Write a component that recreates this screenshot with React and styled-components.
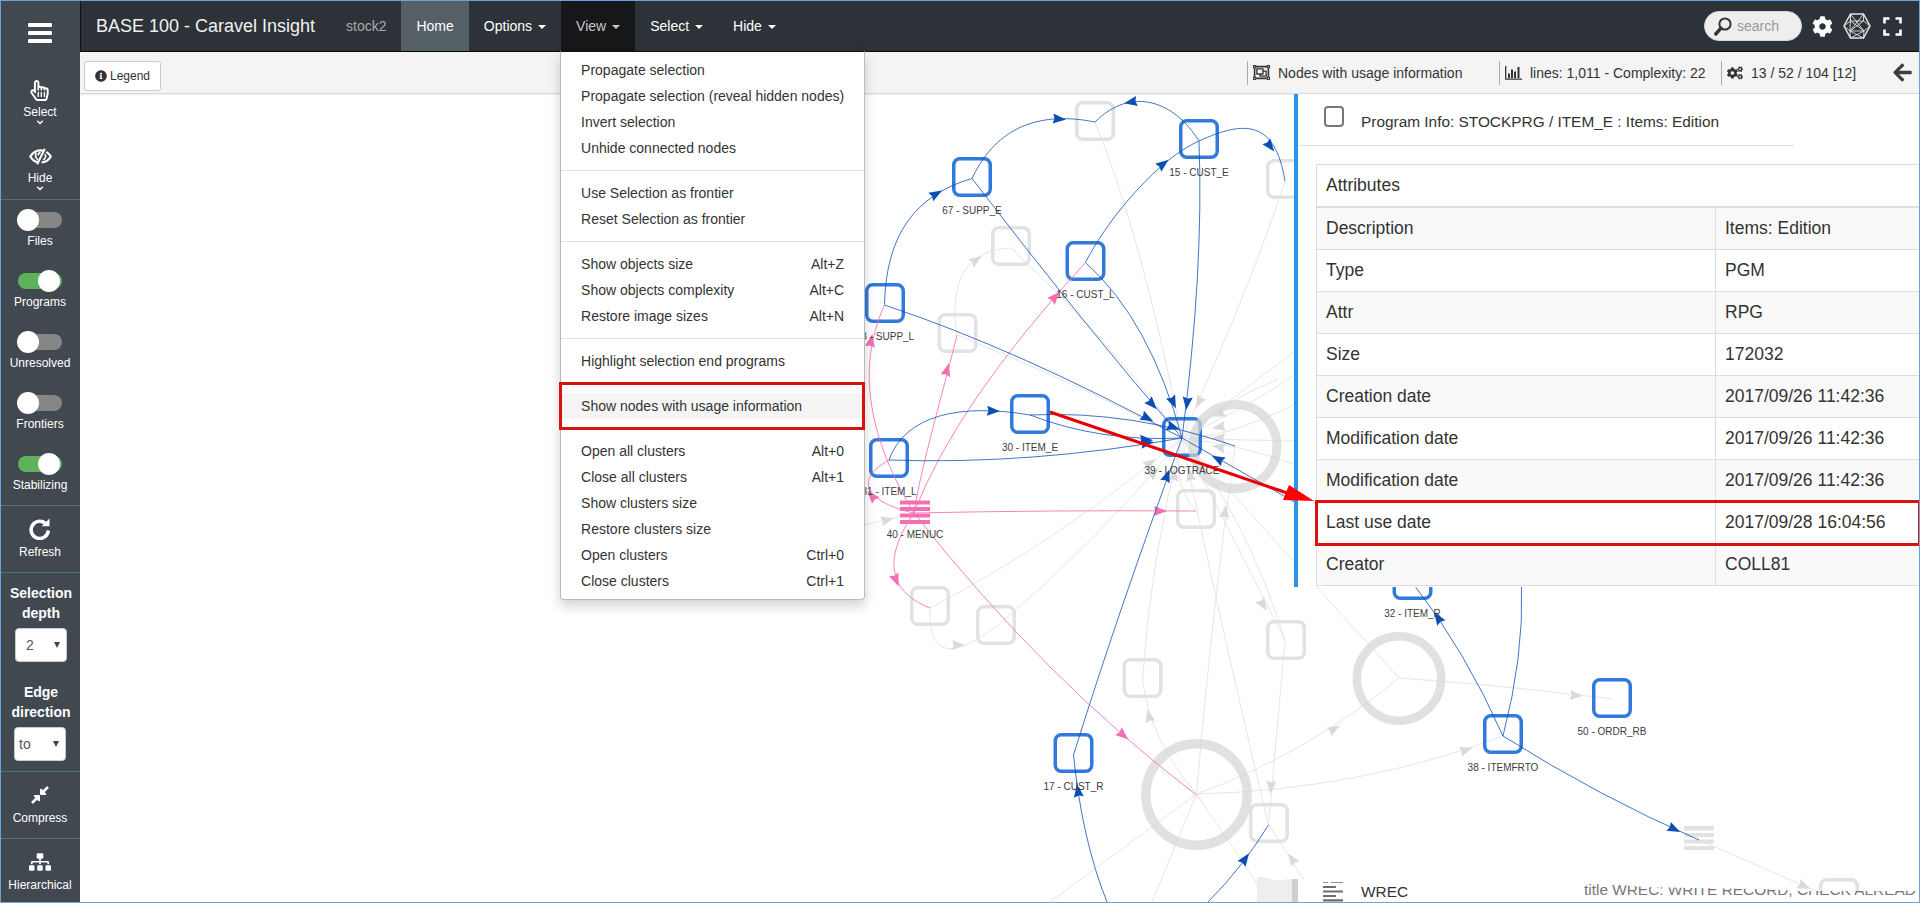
import React from "react";
import styled, { createGlobalStyle, css } from "styled-components";
import {
  FaRegHandPointer,
  FaCompressAlt,
  FaSitemap,
  FaInfoCircle,
  FaRegObjectGroup,
  FaCogs,
  FaArrowLeft,
  FaCog,
} from "react-icons/fa";

const GlobalStyle = createGlobalStyle`
  *, *::before, *::after { box-sizing: border-box; }
  body { margin: 0; background: #fff; overflow: hidden; }
  body, button { font-family: "Liberation Sans", Arial, sans-serif; font-size: 14px; color: #333; }
`;

const Frame = styled.div`
  position: relative;
  display: flex;
  width: 1920px;
  height: 903px;
  border: 1px solid #6aa2dd;
  background: #fff;
  overflow: hidden;
`;

/* ---------- side bar ---------- */

const Sidebar = styled.aside`
  display: flex;
  flex-direction: column;
  flex: none;
  width: 79px;
  background: #414850;
  color: #fff;
`;

const SideSection = styled.section`
  display: flex;
  flex-direction: column;
  align-items: center;
  flex: none;
  height: ${(p) => p.$height}px;
  padding: ${(p) => p.$top || 0}px 1px 0 0;
  border-bottom: ${(p) => (p.$last ? "none" : "1px solid #4b7482")};
  > * { flex: none; }
`;

const Burger = styled.button`
  display: flex;
  flex-direction: column;
  justify-content: space-between;
  width: 24px;
  height: 20px;
  margin: 0 0 34px;
  padding: 0;
  border: 0;
  background: none;
  span {
    height: 4px;
    border-radius: 1px;
    background: #fff;
  }
`;

const Tool = styled.div`
  display: flex;
  flex-direction: column;
  align-items: center;
  height: ${(p) => p.$height || 66}px;
`;

const ToolIcon = styled.div`
  display: flex;
  align-items: center;
  justify-content: center;
  height: 26px;
  margin-bottom: ${(p) => (p.$spaced ? 2 : 1)}px;
`;

const SideLabel = styled.div`
  font-size: 12px;
  line-height: 16px;
  white-space: nowrap;
`;

const ToggleItem = styled.div`
  display: flex;
  flex-direction: column;
  align-items: center;
  height: 61px;
  padding-top: 9px;
`;

const Track = styled.div`
  display: flex;
  align-items: center;
  justify-content: ${(p) => (p.$on ? "flex-end" : "flex-start")};
  width: 44px;
  height: 16px;
  margin: 3px 0 5px;
  border-radius: 8px;
  background: ${(p) => (p.$on ? "#5cb35c" : "#868686")};
`;

const Knob = styled.div`
  flex: none;
  width: 22px;
  height: 22px;
  margin: 0 ${(p) => (p.$on ? "2px" : "0")} 0 ${(p) => (p.$on ? "0" : "-1px")};
  border-radius: 50%;
  background: #fff;
`;

const FieldTitle = styled.div`
  width: 70px;
  margin: 0 0 5px 2px;
  font-size: 14px;
  font-weight: bold;
  line-height: 20px;
  text-align: center;
`;

const SelectBox = styled.div`
  display: flex;
  align-items: center;
  justify-content: space-between;
  width: 52px;
  height: 34px;
  padding: 0 6px 0 ${(p) => p.$indent}px;
  margin: 0 0 20px ${(p) => p.$shift}px;
  border: 1px solid #ccc;
  border-radius: 4px;
  background: #fff;
  color: #555;
`;

const SelectArrow = styled.i`
  border: 3px solid transparent;
  border-top: 6px solid #444;
  border-bottom: 0;
`;

/* ---------- top bars ---------- */

const Main = styled.main`
  display: flex;
  flex-direction: column;
  flex: 1;
  min-width: 0;
`;

const Navbar = styled.nav`
  display: flex;
  align-items: stretch;
  flex: none;
  height: 51px;
  padding-left: 15px;
  border-left: 1px solid #101010;
  border-bottom: 1px solid #080808;
  background: #2d3238;
  line-height: 20px;
`;

const Brand = styled.div`
  width: 235px;
  padding: 15px 0;
  color: #f1f1f1;
  font-size: 18px;
  white-space: nowrap;
`;

const NavItem = styled.div`
  padding: 15px;
  color: ${(p) => (p.$tone === "muted" ? "#aaa" : p.$tone === "open" ? "#c8c8c8" : "#fff")};
  ${(p) => p.$tone === "active" && css`background: #555f66;`}
  ${(p) => p.$tone === "open" && css`background: #161719;`}
`;

const Caret = styled.i`
  display: inline-block;
  margin-left: 6px;
  vertical-align: middle;
  border: 4px solid transparent;
  border-top-color: currentColor;
  border-bottom: 0;
`;

const NavTools = styled.div`
  display: flex;
  align-items: center;
  height: 50px;
  margin-left: auto;
  padding-right: 17px;
  color: #fff;
`;

const SearchField = styled.div`
  display: flex;
  align-items: center;
  gap: 5px;
  width: 98px;
  height: 30px;
  margin-right: 10px;
  padding-left: 9px;
  border: 1px solid #d8d8d8;
  border-radius: 15px;
  background: #eee;
  color: #999;
`;

const Toolbar = styled.div`
  display: flex;
  align-items: flex-start;
  flex: none;
  height: 42px;
  padding: 9px 6px 0 4px;
  border-bottom: 1px solid #d9d9d9;
  background: #f4f4f4;
  box-shadow: 0 1px 1px rgba(0, 0, 0, 0.06);
`;

const LegendButton = styled.button`
  display: flex;
  align-items: center;
  gap: 3px;
  width: 77px;
  height: 30px;
  margin-right: auto;
  padding: 0 0 0 10px;
  border: 1px solid #ccc;
  border-radius: 3px;
  background: #fff;
  font-size: 12px;
`;

const Status = styled.div`
  display: flex;
  align-items: center;
  width: ${(p) => p.$width}px;
  height: 24px;
  padding: 0 0 1px 5px;
  border-left: 1px solid #aaa;
  line-height: 20px;
  white-space: nowrap;
  svg { flex: none; margin-right: ${(p) => p.$gap}px; }
`;

const BackArrow = styled(FaArrowLeft)`
  margin-top: 1px;
  color: #3b3f44;
`;

/* ---------- drop-down menu ---------- */

const NavDropdown = styled.div`
  position: relative;
  display: flex;
`;

const Menu = styled.div`
  position: absolute;
  z-index: 5;
  top: 50px;
  left: -1px;
  width: 305px;
  padding: 5px 0;
  border: 1px solid #bbb;
  border-top-color: #111;
  border-radius: 0 0 4px 4px;
  background: #fff;
  box-shadow: 0 6px 12px rgba(0, 0, 0, 0.18);
  color: #333;
`;

const MenuItem = styled.div`
  display: flex;
  justify-content: space-between;
  padding: 3px 20px;
  white-space: nowrap;
  background: ${(p) => (p.$hover ? "#f5f5f5" : "transparent")};
`;

const MenuDivider = styled.hr`
  height: 1px;
  margin: 9px 0;
  border: 0;
  background: #e2e2e2;
`;

const MenuGap = styled.div`
  height: 10px;
`;

const MenuHighlight = styled.div`
  margin: -2px -1px -2px -2px;
  padding: 8px 0;
  border: 3px solid #dc1010;
  ${MenuItem} { padding-left: 19px; }
`;

/* ---------- work area ---------- */

const Workspace = styled.div`
  position: relative;
  display: flex;
  flex-direction: column;
  justify-content: space-between;
  flex: 1;
  min-height: 0;
`;

const GraphCanvas = styled.svg`
  position: absolute;
  inset: 0;
  width: 1839px;
  height: 808px;
`;

const InfoPanel = styled.section`
  position: relative;
  width: 625px;
  height: 493px;
  margin-left: auto;
  border-left: 4px solid #2795ee;
  background: #fff;
`;

const InfoHeader = styled.header`
  display: flex;
  align-items: flex-start;
  width: 495px;
  height: 52px;
  margin-left: 1px;
  padding: 12px 0 0 25px;
  border-bottom: 1px solid #ddd;
`;

const NodeGlyph = styled.i`
  width: 20px;
  height: 21px;
  margin-right: 17px;
  border: 2px solid #777;
  border-radius: 4px;
`;

const InfoTitle = styled.h1`
  margin: 6px 0 0;
  font-size: 15.4px;
  font-weight: normal;
  line-height: 20px;
  white-space: nowrap;
`;

const AttrTable = styled.div`
  display: flex;
  flex-direction: column;
  margin: 18px 0 0 18px;
  border: 1px solid #ddd;
  border-right: 0;
  font-size: 17.5px;
`;

const AttrHead = styled.div`
  height: 43px;
  padding: 0 9px;
  border-bottom: 2px solid #ddd;
  line-height: 41px;
`;

const AttrRow = styled.div`
  display: grid;
  grid-template-columns: 398px 1fr;
  height: 42px;
  border-bottom: 1px solid #ddd;
  background: ${(p) => (p.$striped ? "#f9f9f9" : "#fff")};
  line-height: 41px;
  &:last-child { height: 41px; border-bottom: 0; }
  span { padding-left: 9px; white-space: nowrap; }
  span + span { border-left: 1px solid #ddd; }
  ${(p) =>
    p.$marked &&
    css`
      outline: 3px solid #dc1010;
      outline-offset: -1px;
      z-index: 1;
    `}
`;

const RecordRow = styled.footer`
  position: relative;
  display: flex;
  align-items: flex-end;
  width: 596px;
  height: 23px;
  margin-left: 1243px;
  font-size: 15.4px;
  line-height: 20px;
  white-space: nowrap;
`;

const RecordName = styled.div`
  width: 223px;
  margin-left: 18px;
`;

const RecordTitle = styled.div`
  margin-bottom: 2px;
  color: #777;
  clip-path: polygon(0 3px, 25px 4px, 60px 7px, 110px 8px, 180px 9px, 215px 11px, 340px 11px, 340px 20px, 0 20px);
`;

const Annotation = styled.svg`
  position: absolute;
  left: 1040px;
  top: 400px;
  width: 280px;
  height: 110px;
  pointer-events: none;
`;

/* ---------- icons ---------- */

const EyeClosed = () => (
  <svg width="23" height="17" viewBox="0 0 23 17" fill="none" stroke="#fff">
    <path d="M9.4 14.4C5.6 13.8 2.9 11.200 1.300 8.500 3.600 4.600 7.200 2.300 11.500 2.300c1 0 1.900.1 2.800.4" strokeWidth="2.200" />
    <path d="M17.200 3.900c2 1.100 3.500 2.700 4.600 4.600-2.100 3.600-5.200 5.700-9.300 6" strokeWidth="2.200" />
    <path d="M15.800.8 8.200 16.400" strokeWidth="2" />
    <path d="M7.300 4.800c-1.300 2.600-.8 5.200 1.800 7M11.600 4.600c-1.500.2-2.300 1.100-2.500 2.700M16.300 6c.7 2.400.1 4.500-2.100 6.200" strokeWidth="1.600" />
  </svg>
);

const RefreshIcon = () => (
  <svg width="22" height="22" viewBox="0 0 22 22">
    <path d="M16.200 5.200A8.600 8.600 0 1 0 19.300 12.500" fill="none" stroke="#fff" strokeWidth="3.500" />
    <path d="M20.500.5v7.800h-7.900z" fill="#fff" />
  </svg>
);

const Chevron = () => (
  <svg width="8" height="5" viewBox="0 0 8 5">
    <path d="M1.200.8 4 3.600 6.800.8" fill="none" stroke="#fff" strokeWidth="1.400" />
  </svg>
);

const SearchIcon = () => (
  <svg width="18" height="19" viewBox="0 0 18 19" fill="none" stroke="#333">
    <circle cx="11" cy="7" r="5.600" strokeWidth="2" />
    <path d="M7 11.200 1.800 17" strokeWidth="3.400" strokeLinecap="round" />
  </svg>
);

const HexIcon = styled((props) => (
  <svg {...props} width="28" height="26" viewBox="0 0 28 26" fill="none" stroke="#e2e2e2">
    <path d="M7.500 1h13L27 13l-6.500 12h-13L1 13z" strokeWidth="1.500" />
    <path d="M7.500 1 21 18H7zM20.500 1 7 18l.5 7L21 18l-.5 7L7 18 1 13l6.500-5L20.500 8 27 13l-6 5M7.500 8 21 18M20.500 8 7 18M7.500 1v7M20.500 1v7" strokeWidth=".9" />
  </svg>
))`
  margin: 0 12px 0 10px;
`;

const ExpandIcon = () => (
  <svg width="19" height="19" viewBox="0 0 19 19" fill="none" stroke="#fff" strokeWidth="2.600">
    <path d="M1.500 6.500v-5h5M12.500 1.500h5v5M17.500 12.500v5h-5M6.500 17.500h-5v-5" />
  </svg>
);

const BarsIcon = () => (
  <svg width="17" height="14" viewBox="0 0 17 14" fill="none" stroke="#333">
    <path d="M.7 0v13.200H17" strokeWidth="1.300" />
    <path d="M4 12V7.500M7 12V3.500M10 12V5.500M13.500 12V1" strokeWidth="2" />
  </svg>
);

const LinesIcon = () => (
  <svg width="20" height="20" viewBox="0 0 20 20" fill="#6e6e69">
    <path d="M0 0h5v.7H0zM8 0h12v.7H8zM0 4h13v2H0zM0 8.500h20v2H0zM0 13h13v2H0zM0 17.200h20v2.300H0z" />
  </svg>
);

/* ---------- graph ---------- */

const Label = styled.text`
  font: 10px "Liberation Sans", Arial, sans-serif;
  fill: #3c3c3c;
  text-anchor: middle;
`;

const BLUE = "#0b4fb3";
const PINK = "#f56fb1";

const programNodes = [
  [972, 177, "67 - SUPP_E"],
  [1199, 139, "15 - CUST_E"],
  [1085.500, 261, "16 - CUST_L"],
  [885, 303, "68 - SUPP_L"],
  [1030, 414, "30 - ITEM_E"],
  [889, 458, "31 - ITEM_L"],
  [1182, 437, "39 - LOGTRACE"],
  [1073.500, 753, "17 - CUST_R"],
  [1412.500, 580, "32 - ITEM_R"],
  [1503, 734, "38 - ITEMFRTO"],
  [1612, 698, "50 - ORDR_RB"],
];

const fadedNodes = [
  [1095, 121], [1011, 246], [957.500, 333], [1286, 179], [1196, 509], [930, 606],
  [996, 625], [1286, 640], [1142.500, 678], [1269, 823],
];

const fadedEdges = [
  "M957 335C950 290 960 250 1011 248",
  "M1095 122Q1140 230 1182 438",
  "M1011 248Q1110 340 1182 438",
  "M957 335Q1080 385 1182 438",
  "M1285 181Q1255 275 1182 438",
  "M865 525L914 513",
  "M930 608Q1060 540 1182 438",
  "M930 608C928 670 966 648 996 627",
  "M996 627Q1100 540 1182 438",
  "M1196 511Q1170 480 1182 438",
  "M1196.500 794Q1212 610 1235 447",
  "M1182 438Q1248 520 1285 641",
  "M1182 438Q1150 560 1142.500 680",
  "M1182 438Q1215 600 1268.500 825",
  "M1182 438L1285 640",
  "M1285 641L1268.500 825",
  "M1196.500 794Q1150 740 1142.500 680",
  "M1196.500 794Q1305 755 1399 678",
  "M1196.500 794Q1360 790 1503 736",
  "M1196.500 794L1050 902",
  "M1196.500 794L1152 902",
  "M1196.500 794L1260 888",
  "M1304 880L1269 825",
  "M1399 678L1182 438",
  "M1399 678Q1500 685 1612 699",
  "M1699 840L1820 893",
  "M1182 438Q1230 400 1294 352",
  "M1182 438Q1260 400 1294 375",
  "M1182 438Q1220 440 1294 405",
  "M1182 438Q1240 440 1294 441",
  "M1182 438Q1240 445 1294 464",
  "M1182 438Q1225 400 1278 379",
];

const blueEdges = [
  "M884.500 304.500C886 235 915 195 972 178.500",
  "M972 178.500C990 140 1025 108 1095 122",
  "M1198.700 140.700C1175 102 1132 85 1095 122",
  "M1085.500 262.300C1110 215 1160 158 1199 141",
  "M1199 141C1245 120 1275 120 1285 181",
  "M972 178.500Q1080 320 1182 438",
  "M1085.500 262.500Q1150 320 1182 438",
  "M1199 141Q1204 270 1182 438",
  "M884.500 305Q1020 350 1182 438",
  "M889 460C905 415 960 403 1030 415",
  "M1030 415Q1130 410 1235 446",
  "M1030 415Q1100 442 1182 438",
  "M889 460Q1030 465 1182 438",
  "M1298 504L1182 438",
  "M1073.500 755Q1118 612 1182 438",
  "M1107 902Q1082 840 1073.500 755",
  "M1208 902Q1242 868 1268.500 825",
  "M1503 736Q1465 650 1412 582",
  "M1503 736Q1524 655 1521.500 587",
  "M1503 736Q1600 797 1699 840",
];

const pinkEdges = [
  "M914 513C870 440 855 370 884.500 305",
  "M914 513C880 506 845 485 889 460",
  "M914 513C920 470 945 385 957 335",
  "M914 513Q955 405 1085.500 262.500",
  "M914 513Q1050 510 1196 511",
  "M914 513C885 555 885 590 930 608",
  "M914 513Q1045 680 1196.500 795",
];

const blueArrows = [
  [936, 194, -30], [1059, 119, 4], [1131, 102, 170], [1163, 164, -38], [1270, 146, 52],
  [1152, 404, 48], [1173, 402, 66], [1187, 403, 97], [1147, 418, 27], [993, 411, 3],
  [1173, 427, 18], [1146, 440, 2], [1147, 443, -8], [1218, 459, 208], [1167, 476, -70],
  [1078, 791, -98], [1245, 859, -54], [1438, 618, -124], [1674, 829, 26],
];

const pinkArrows = [
  [871, 341, -80], [872, 496, -130], [947, 370, -74], [1055, 297, -48], [1160, 511, 0],
  [896, 580, 68], [1123, 735, 40],
];

const fadedArrows = [
  [976, 260, -35], [887, 520, -14], [958, 645, 0], [1263, 605, 60], [1149, 716, -102],
  [1334, 729, -30], [1271, 787, 94], [1466, 750, -18], [1292, 859, -124], [1576, 695.500, 4],
  [1804, 886, 24], [1225, 512, -82], [1199, 402, 118], [1219, 414, 160], [1219, 427, 170],
  [1219, 438, 180], [1219, 447, 190], [1150, 463, -32], [1154, 473, -42], [1174, 475, -85],
  [1190, 475, -100],
];

const Arrow = ({ at, color }) => (
  <path d="M7 0-6-5-4.500 0-6 5z" fill={color} transform={`translate(${at[0]} ${at[1]}) rotate(${at[2]})`} />
);

const NodeBox = ({ x, y, color }) => (
  <rect x={x - 18.250} y={y - 18.250} width="36.500" height="36.500" rx="6" fill="none" stroke={color} strokeWidth="3.500" />
);

const Graph = () => (
  <GraphCanvas viewBox="80 94 1839 808">
    <clipPath id="lower-edge"><path d="M1790 870H1919V893H1790z" /></clipPath>
    <g fill="none" stroke="#e6e6e6" strokeWidth="1">
      {fadedEdges.map((d) => <path key={d} d={d} />)}
    </g>
    {fadedArrows.map((a) => <Arrow key={a.join()} at={a} color="#dadada" />)}
    {programNodes.map(([x, y]) => <NodeBox key={x} x={x} y={y} color="#3179db" />)}
    {fadedNodes.map(([x, y]) => <NodeBox key={x + "," + y} x={x} y={y} color="#e2e2e2" />)}
    <g clipPath="url(#lower-edge)"><NodeBox x={1839} y={898} color="#e2e2e2" /></g>
    <g fill="none" stroke="#d4d4d4" strokeOpacity=".7">
      <circle cx="1235" cy="446.500" r="42" strokeWidth="9" />
      <circle cx="1399" cy="678.500" r="42.200" strokeWidth="8.500" />
      <circle cx="1196.500" cy="794.500" r="50.700" strokeWidth="9.500" />
    </g>
    <path d="M1684 826h30v4.500h-30zM1684 833h30v4h-30zM1684 839.500h30v4h-30zM1684 846h30v4h-30z" fill="#e2e2e2" />
    <path d="M900 500.500h30v4h-30zM900 507h30v4h-30zM900 513.500h30v4h-30zM900 520h30v4h-30z" fill={PINK} />
    <path d="M1257 877c8-1 12 3 20 3s10-1 15-1v23h-35z" fill="#eee" />
    <path d="M1292 879h6v23h-6z" fill="#cfcfcf" />
    <g fill="none" stroke={PINK} strokeWidth="1" strokeOpacity=".85">
      {pinkEdges.map((d) => <path key={d} d={d} />)}
    </g>
    {pinkArrows.map((a) => <Arrow key={a.join()} at={a} color={PINK} />)}
    <g fill="none" stroke={BLUE} strokeWidth="1" strokeOpacity=".78">
      {blueEdges.map((d) => <path key={d} d={d} />)}
    </g>
    {blueArrows.map((a) => <Arrow key={a.join()} at={a} color={BLUE} />)}
    {programNodes.map(([x, y, name]) => <Label key={name} x={x} y={y + 37}>{name}</Label>)}
    <Label x="915" y="538">40 - MENUC</Label>
  </GraphCanvas>
);

/* ---------- data ---------- */

const toggles = [["Files", false], ["Programs", true], ["Unresolved", false], ["Frontiers", false], ["Stabilizing", true]];

const menuGroups = [
  [["Propagate selection"], ["Propagate selection (reveal hidden nodes)"], ["Invert selection"], ["Unhide connected nodes"]],
  [["Use Selection as frontier"], ["Reset Selection as frontier"]],
  [["Show objects size", "Alt+Z"], ["Show objects complexity", "Alt+C"], ["Restore image sizes", "Alt+N"]],
  [["Highlight selection end programs"]],
];

const clusterItems = [
  ["Open all clusters", "Alt+0"], ["Close all clusters", "Alt+1"], ["Show clusters size"],
  ["Restore clusters size"], ["Open clusters", "Ctrl+0"], ["Close clusters", "Ctrl+1"],
];

const attributes = [
  ["Description", "Items: Edition"], ["Type", "PGM"], ["Attr", "RPG"], ["Size", "172032"],
  ["Creation date", "2017/09/26 11:42:36"], ["Modification date", "2017/09/26 11:42:36"],
  ["Modification date", "2017/09/26 11:42:36"], ["Last use date", "2017/09/28 16:04:56"], ["Creator", "COLL81"],
];

const MenuItems = ({ items }) =>
  items.map(([name, keys]) => (
    <MenuItem key={name}><span>{name}</span>{keys && <span>{keys}</span>}</MenuItem>
  ));

const ViewMenu = () => (
  <Menu>
    {menuGroups.map((items, i) => (
      <React.Fragment key={i}>
        {i > 0 && <MenuDivider />}
        <MenuItems items={items} />
      </React.Fragment>
    ))}
    <MenuGap />
    <MenuHighlight>
      <MenuItem $hover><span>Show nodes with usage information</span></MenuItem>
    </MenuHighlight>
    <MenuGap />
    <MenuItems items={clusterItems} />
  </Menu>
);

const SideTool = ({ icon, label, menu, height }) => (
  <Tool $height={height}>
    <ToolIcon $spaced={!menu}>{icon}</ToolIcon>
    <SideLabel>{label}</SideLabel>
    {menu && <Chevron />}
  </Tool>
);

export default function App() {
  return (
    <>
      <GlobalStyle />
      <Frame>
        <Sidebar>
          <SideSection $height={199} $top={22}>
            <Burger><span /><span /><span /></Burger>
            <SideTool icon={<FaRegHandPointer size={21} />} label="Select" menu />
            <SideTool icon={<EyeClosed />} label="Hide" menu height={56} />
          </SideSection>
          <SideSection $height={306}>
            {toggles.map(([name, on]) => (
              <ToggleItem key={name}>
                <Track $on={on}><Knob $on={on} /></Track>
                <SideLabel>{name}</SideLabel>
              </ToggleItem>
            ))}
          </SideSection>
          <SideSection $height={67} $top={10}>
            <SideTool icon={<RefreshIcon />} label="Refresh" height={50} />
          </SideSection>
          <SideSection $height={199} $top={10}>
            <FieldTitle>Selection depth</FieldTitle>
            <SelectBox $indent={10} $shift={2}>2<SelectArrow /></SelectBox>
            <FieldTitle>Edge direction</FieldTitle>
            <SelectBox $indent={4} $shift={0}>to<SelectArrow /></SelectBox>
          </SideSection>
          <SideSection $height={67} $top={10}>
            <SideTool icon={<FaCompressAlt size={20} />} label="Compress" height={50} />
          </SideSection>
          <SideSection $height={63} $top={10} $last>
            <SideTool icon={<FaSitemap size={22} />} label="Hierarchical" height={50} />
          </SideSection>
        </Sidebar>
        <Main>
          <Navbar>
            <Brand>BASE 100 - Caravel Insight</Brand>
            <NavItem $tone="muted">stock2</NavItem>
            <NavItem $tone="active">Home</NavItem>
            <NavItem>Options<Caret /></NavItem>
            <NavDropdown>
              <NavItem $tone="open">View<Caret /></NavItem>
              <ViewMenu />
            </NavDropdown>
            <NavItem>Select<Caret /></NavItem>
            <NavItem>Hide<Caret /></NavItem>
            <NavTools>
              <SearchField><SearchIcon />search</SearchField>
              <FaCog size={21} />
              <HexIcon />
              <ExpandIcon />
            </NavTools>
          </Navbar>
          <Toolbar>
            <LegendButton><FaInfoCircle size={12} />Legend</LegendButton>
            <Status $width={252} $gap={8}><FaRegObjectGroup size={17} />Nodes with usage information</Status>
            <Status $width={222} $gap={8}><BarsIcon />lines: 1,011 - Complexity: 22</Status>
            <Status $width={171} $gap={8}><FaCogs size={16} />13 / 52 / 104 [12]</Status>
            <BackArrow size={21} />
          </Toolbar>
          <Workspace>
            <Graph />
            <InfoPanel>
              <InfoHeader>
                <NodeGlyph />
                <InfoTitle>Program Info: STOCKPRG / ITEM_E : Items: Edition</InfoTitle>
              </InfoHeader>
              <AttrTable>
                <AttrHead>Attributes</AttrHead>
                {attributes.map(([name, value], i) => (
                  <AttrRow key={i} $striped={i % 2 === 0} $marked={name === "Last use date"}>
                    <span>{name}</span>
                    <span>{value}</span>
                  </AttrRow>
                ))}
              </AttrTable>
            </InfoPanel>
            <RecordRow>
              <LinesIcon />
              <RecordName>WREC</RecordName>
              <RecordTitle>title WREC: WRITE RECORD, CHECK ALREAD</RecordTitle>
            </RecordRow>
          </Workspace>
        </Main>
        <Annotation viewBox="1041 401 280 110">
          <path d="M1050 412 1290 494" stroke="#e80000" strokeWidth="3" />
          <path d="M1314 501 1283 500 1289 485z" fill="#f00" />
        </Annotation>
      </Frame>
    </>
  );
}
